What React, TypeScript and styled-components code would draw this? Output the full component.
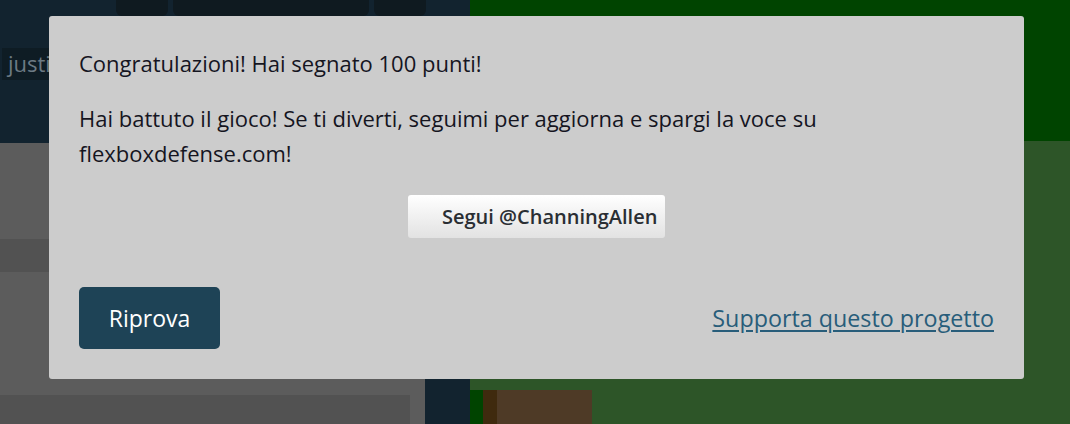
import React from "react";
import styled, { createGlobalStyle } from "styled-components";

const Global = createGlobalStyle`
  html, body { margin: 0; padding: 0; }
  body { width: 1070px; height: 424px; overflow: hidden; background: #5c5c5c; font-family: "Open Sans", "Noto Sans", sans-serif; }
  #root { width: 1070px; height: 424px; }
`;

const Stage = styled.div`
  position: relative;
  width: 1070px;
  height: 424px;
  overflow: hidden;
  display: grid;
  grid-template-columns: 470px 1fr;
`;

const LeftPanel = styled.div`
  display: grid;
  grid-template-rows: 143px 1fr;
`;

const Header = styled.div`
  background: #12232f;
  display: flex;
  flex-direction: column;
  overflow: hidden;
`;

const Toolbar = styled.div`
  display: flex;
  gap: 5px;
  padding-left: 116px;
  margin-top: -26px;
`;

const ToolBtn = styled.div<{ $w: number }>`
  width: ${(p) => p.$w}px;
  height: 42px;
  background: #0f1a20;
  border-radius: 6px;
  color: #8a8f93;
  font-size: 22px;
  display: flex;
  align-items: flex-start;
  justify-content: center;
  padding-top: 0;
  box-sizing: border-box;
`;

const CodeLabel = styled.div`
  margin: 32px 0 0 2px;
  width: 47px;
  height: 32px;
  overflow: hidden;
  background: #0e1c24;
  color: #6c7a83;
  font-size: 22px;
  line-height: 31px;
  padding-left: 6px;
  box-sizing: border-box;
  white-space: nowrap;
`;

const Body = styled.div`
  display: grid;
  grid-template-columns: 425px 1fr;
`;

const GrayArea = styled.div`
  background: #5c5c5c;
  display: flex;
  flex-direction: column;
`;

const Strip = styled.div`
  margin-top: 96px;
  height: 33px;
  background: #525252;
`;

const BottomBox = styled.div`
  margin-top: 123px;
  width: 410px;
  height: 40px;
  background: #525252;
`;

const NavyStrip = styled.div`
  background: #12232f;
`;

const Board = styled.div`
  display: grid;
  grid-template-rows: 141px 1fr;
`;

const BoardTop = styled.div`
  background: #004400;
`;

const BoardBottom = styled.div`
  background: #2d5528;
  display: flex;
  align-items: flex-end;
`;

const Cell = styled.div<{ $w: number; $c: string }>`
  width: ${(p) => p.$w}px;
  height: 45px;
  background: ${(p) => p.$c};
`;

const Modal = styled.div`
  position: absolute;
  left: 49px;
  top: 16px;
  width: 975px;
  height: 363px;
  box-sizing: border-box;
  background: #cccccc;
  border-radius: 3px;
  padding: 30px;
  display: flex;
  flex-direction: column;
  color: #15151f;
`;

const Para = styled.p`
  margin: 0 0 20px;
  font-size: 22px;
  line-height: 35px;
`;

const ShareRow = styled.div`
  display: flex;
  justify-content: center;
  margin-top: 4px;
`;

const FollowBtn = styled.div`
  width: 257px;
  height: 43px;
  box-sizing: border-box;
  padding-left: 34px;
  display: flex;
  align-items: center;
  background: linear-gradient(#ffffff, #e2e2e2);
  border-radius: 3px;
  font-size: 20px;
  font-weight: 600;
  color: #2a2e33;
  white-space: nowrap;
`;

const Footer = styled.div`
  margin-top: auto;
  display: flex;
  align-items: center;
  justify-content: space-between;
`;

const RetryBtn = styled.button`
  width: 141px;
  height: 62px;
  border: none;
  border-radius: 5px;
  background: #1e4356;
  color: #ffffff;
  font-family: inherit;
  font-size: 23px;
  padding: 0;
`;

const SupportLink = styled.a`
  color: #285d7a;
  font-size: 23.3px;
  text-decoration: underline;
  text-underline-offset: 3px;
`;

export default function App() {
  return (
    <>
      <Global />
      <Stage>
        <LeftPanel>
          <Header>
            <Toolbar>
              <ToolBtn $w={52} />
              <ToolBtn $w={196}>Onda 1 di 12</ToolBtn>
              <ToolBtn $w={52} />
            </Toolbar>
            <CodeLabel>justify-content</CodeLabel>
          </Header>
          <Body>
            <GrayArea>
              <Strip />
              <BottomBox />
            </GrayArea>
            <NavyStrip />
          </Body>
        </LeftPanel>
        <Board>
          <BoardTop />
          <BoardBottom>
            <Cell $w={13} $c="#004400" />
            <Cell $w={14} $c="#3f2a0e" />
            <Cell $w={95} $c="#4e3a26" />
          </BoardBottom>
        </Board>
        <Modal>
          <Para>Congratulazioni! Hai segnato 100 punti!</Para>
          <Para>
            Hai battuto il gioco! Se ti diverti, seguimi per aggiorna e spargi la voce su
            flexboxdefense.com!
          </Para>
          <ShareRow>
            <FollowBtn>Segui @ChanningAllen</FollowBtn>
          </ShareRow>
          <Footer>
            <RetryBtn>Riprova</RetryBtn>
            <SupportLink href="#">Supporta questo progetto</SupportLink>
          </Footer>
        </Modal>
      </Stage>
    </>
  );
}
